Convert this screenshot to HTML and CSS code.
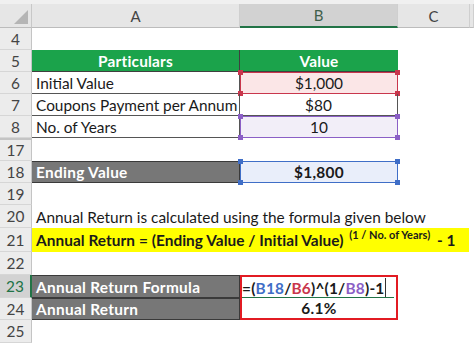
FILE: index.html
```html
<!DOCTYPE html>
<html>
<head>
    <title>Annual Return</title>
    <meta name="viewport" content="width=device-width, initial-scale=1.0">
    <link rel="stylesheet" href="styles.css">
</head>
<body>
    <div class="sheet">
        <div class="row head">
            <div class="corner"><span class="tri"></span></div>
            <div class="col">A</div>
            <div class="col sel">B</div>
            <div class="col">C</div>
            <div class="col"></div>
        </div>

        <div class="row h22">
            <div class="num">4</div><div class="cell"></div><div class="cell"></div><div class="cell rest"></div>
        </div>
        <div class="row h22">
            <div class="num">5</div>
            <div class="cell green tl">Particulars</div>
            <div class="cell green tr">Value</div>
            <div class="cell rest"></div>
        </div>
        <div class="row h22">
            <div class="num">6</div>
            <div class="cell ta">Initial Value</div>
            <div class="cell ref red">$1,000
                <span class="hd a"></span><span class="hd b"></span><span class="hd c"></span><span class="hd d"></span>
            </div>
            <div class="cell rest"></div>
        </div>
        <div class="row h22">
            <div class="num">7</div>
            <div class="cell ta">Coupons Payment per Annum</div>
            <div class="cell tb">$80</div>
            <div class="cell rest"></div>
        </div>
        <div class="row h22">
            <div class="num">8</div>
            <div class="cell ta">No. of Years</div>
            <div class="cell ref purple">10
                <span class="hd a"></span><span class="hd b"></span><span class="hd c"></span><span class="hd d"></span>
            </div>
            <div class="cell rest"></div>
        </div>
        <div class="row h23">
            <div class="num hidden">17</div><div class="cell"></div><div class="cell"></div><div class="cell rest"></div>
        </div>
        <div class="row h22">
            <div class="num">18</div>
            <div class="cell dark">Ending Value</div>
            <div class="cell ref blue bold">$1,800
                <span class="hd a"></span><span class="hd b"></span><span class="hd c"></span><span class="hd d"></span>
            </div>
            <div class="cell rest"></div>
        </div>
        <div class="row h22">
            <div class="num">19</div><div class="cell"></div><div class="cell"></div><div class="cell rest"></div>
        </div>
        <div class="row h23">
            <div class="num">20</div>
            <div class="cell span">Annual Return is calculated using the formula given below</div>
        </div>
        <div class="row h24">
            <div class="num">21</div>
            <div class="line">
                <span class="note">Annual Return = (Ending Value / Initial Value) <sup>(1 / No. of Years)</sup> - 1</span>
            </div>
        </div>
        <div class="row h23">
            <div class="num">22</div><div class="cell"></div><div class="cell"></div><div class="cell rest"></div>
        </div>
        <div class="row h23">
            <div class="num cur">23</div>
            <div class="cell dark">Annual Return Formula</div>
            <div class="cell edit">=(<span class="c-blue">B18</span>/<span class="c-red">B6</span>)^(1/<span class="c-purple">B8</span>)-1<span class="caret"></span></div>
            <div class="cell rest"></div>
        </div>
        <div class="row h22">
            <div class="num">24</div>
            <div class="cell dark">Annual Return</div>
            <div class="cell result">6.1%</div>
            <div class="cell rest"></div>
        </div>
        <div class="row h23">
            <div class="num">25</div><div class="cell"></div><div class="cell"></div><div class="cell rest"></div>
        </div>
    </div>
</body>
</html>
```

FILE: styles.css
```css
body {
    margin: 0;
    background-color: white;
    font-family: 'Lato', 'Liberation Sans', sans-serif;
    font-size: 15.4px;
    color: #1a1a1a;
}

.sheet {
    width: 474px;
    height: 343px;
    overflow: hidden;
}

.row {
    display: grid;
    grid-template-columns: 32px 208px 158px 72px 1fr;
}

.h22 { height: 22px; }
.h23 { height: 23px; }
.h24 { height: 24px; }

/* column headers */
.head {
    height: 28px;
    background-color: #e6e6e6;
    border-top: 4px solid #f0f0f0;
    box-sizing: border-box;
}

.corner {
    position: relative;
    border-right: 1px solid #c8c8c8;
    border-bottom: 1px solid #bcbcbc;
}

.tri {
    position: absolute;
    right: 3px;
    bottom: 3px;
    width: 0;
    height: 0;
    border-left: 14px solid transparent;
    border-bottom: 14px solid #b5b5b5;
}

.col {
    display: flex;
    align-items: center;
    justify-content: center;
    color: #444;
    font-size: 15px;
    border-right: 1px solid #cfcfcf;
    border-bottom: 1px solid #bcbcbc;
    box-sizing: border-box;
}

.col.sel {
    background-color: #d2d2d2;
    color: #3f5f4a;
    border-bottom: 2px solid #217346;
}

/* row numbers */
.num {
    display: flex;
    align-items: center;
    justify-content: center;
    background-color: #ececec;
    color: #444;
    font-size: 15.4px;
    border-right: 1px solid #c4c4c4;
    border-bottom: 1px solid #d6d6d6;
    box-sizing: border-box;
}

.num.hidden {
    border-top: 2px solid #c4c4c4;
}

.num.cur {
    background-color: #d2d2d2;
    color: #217346;
    border-right: 2px solid #217346;
}

/* cells */
.cell {
    position: relative;
    display: flex;
    align-items: center;
    padding: 0 4px;
    box-sizing: border-box;
    white-space: nowrap;
}

.cell.rest {
    grid-column: 4 / 6;
}

.cell.span {
    grid-column: 2 / 6;
}

.green {
    background-color: #1ba34b;
    color: white;
    font-weight: bold;
    letter-spacing: 0.2px;
    justify-content: center;
    border-bottom: 1px solid #3f3f3f;
}

.green.tl {
    border-right: 1px solid #3f3f3f;
}

.ta {
    border-bottom: 1px solid #555;
    border-right: 1px solid #555;
}

.tb {
    justify-content: center;
    border-bottom: 1px solid #555;
    border-right: 1px solid #555;
}

.dark {
    background-color: #777;
    color: white;
    font-weight: bold;
    letter-spacing: 0.3px;
    border: 1px solid #3a3a3a;
    border-left: none;
}

.ref {
    justify-content: center;
    border: 1px solid;
}

.bold {
    font-weight: bold;
    letter-spacing: 0.3px;
}

.red {
    background-color: #fbe6e7;
    border-color: #c9364c;
}

.purple {
    background-color: #f2eef8;
    border-color: #8b5fc6;
}

.blue {
    background-color: #e9eefa;
    border-color: #3f6ec7;
}

/* selection handles on the referenced cells */
.hd {
    position: absolute;
    width: 5px;
    height: 5px;
}

.red .hd { background-color: #c9364c; }
.purple .hd { background-color: #8b5fc6; }
.blue .hd { background-color: #3f6ec7; }

.hd.a { top: -3px; left: -3px; }
.hd.b { top: -3px; right: -3px; }
.hd.c { bottom: -3px; left: -3px; }
.hd.d { bottom: -3px; right: -3px; }

/* row 21: highlighted formula */
.line {
    grid-column: 2 / 6;
    white-space: nowrap;
    line-height: 24px;
}

.note {
    display: inline-block;
    background-color: #ffff00;
    font-weight: bold;
    letter-spacing: 0.05px;
    padding: 0 13px 0 4px;
}

.note sup {
    font-size: 11px;
    line-height: 0;
    letter-spacing: 0;
    margin: 0 3px 0 2px;
    position: relative;
    top: -1px;
}

.edit {
    font-weight: bold;
    letter-spacing: 0.2px;
    padding-left: 0;
    border: 2px solid #e21b23;
    border-bottom: none;
}

.edit::after {
    content: "";
    position: absolute;
    left: 0;
    right: 2px;
    bottom: 0;
    height: 1px;
    background-color: #217346;
}

.c-blue { color: #3f6ec7; }
.c-red { color: #c9364c; }
.c-purple { color: #8b5fc6; }

.caret {
    display: inline-block;
    width: 1px;
    height: 20px;
    margin-left: 1px;
    background-color: #333;
}

.result {
    font-weight: bold;
    letter-spacing: 0.3px;
    justify-content: center;
    border: 2px solid #e21b23;
    border-top: none;
}
```
